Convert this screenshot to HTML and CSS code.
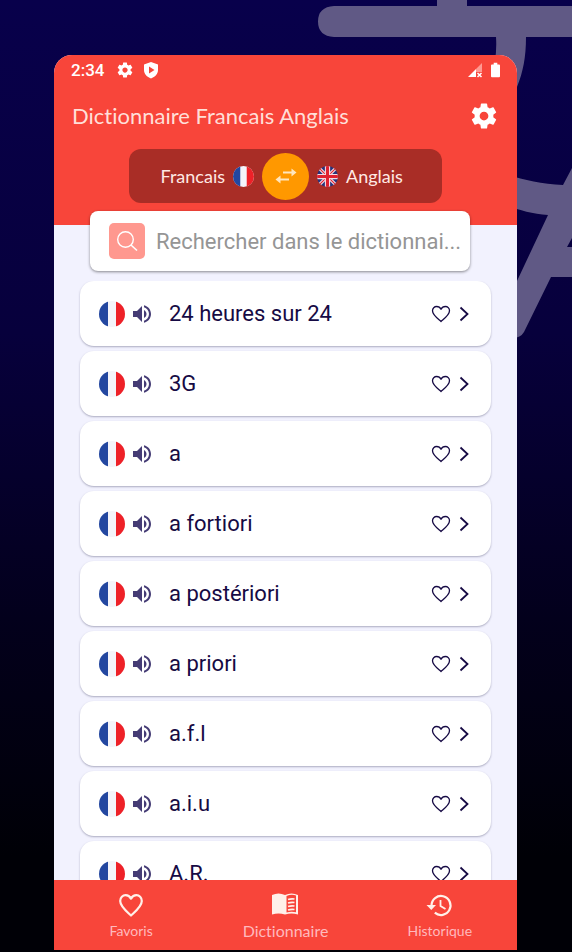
FILE: index.html
```
<!DOCTYPE html>
<html lang="fr">
<head>
    <meta charset="UTF-8">
    <meta name="viewport" content="width=device-width, initial-scale=1.0">
    <title>Dictionnaire Francais Anglais</title>
    <link rel="stylesheet" href="styles.css">
</head>
<body>
    <!-- shared icons -->
    <svg class="sprite" aria-hidden="true">
        <symbol id="gear" viewBox="0 0 24 24"><path d="M19.43 12.98c.04-.32.07-.64.07-.98s-.03-.66-.07-.98l2.11-1.65c.19-.15.24-.42.12-.64l-2-3.46c-.12-.22-.39-.3-.61-.22l-2.49 1c-.52-.4-1.08-.73-1.69-.98l-.38-2.65C14.46 2.18 14.25 2 14 2h-4c-.25 0-.46.18-.49.42l-.38 2.65c-.61.25-1.17.59-1.69.98l-2.49-1c-.23-.09-.49 0-.61.22l-2 3.46c-.13.22-.07.49.12.64l2.11 1.65c-.04.32-.07.65-.07.98s.03.66.07.98l-2.11 1.65c-.19.15-.24.42-.12.64l2 3.46c.12.22.39.3.61.22l2.49-1c.52.4 1.08.73 1.69.98l.38 2.65c.03.24.24.42.49.42h4c.25 0 .46-.18.49-.42l.38-2.65c.61-.25 1.17-.59 1.69-.98l2.49 1c.23.09.49 0 .61-.22l2-3.46c.12-.22.07-.49-.12-.64l-2.11-1.65zM12 15.5c-1.93 0-3.5-1.57-3.5-3.5s1.57-3.5 3.5-3.5 3.5 1.57 3.5 3.5-1.57 3.5-3.5 3.5z" fill="currentColor"/></symbol>
        <symbol id="flag-fr" viewBox="0 0 26 26">
            <clipPath id="round-fr"><circle cx="13" cy="13" r="13"/></clipPath>
            <g clip-path="url(#round-fr)">
                <path d="M0 0h26v26H0z" fill="#f4f4fa"/>
                <path d="M0 0h9v26H0z" fill="#2347a0"/>
                <path d="M17 0h9v26h-9z" fill="#ee2128"/>
            </g>
        </symbol>
        <symbol id="speaker" viewBox="0 0 24 24"><path d="M3 9v6h4l5 5V4L7 9H3zm13.500 3c0-1.770-1.020-3.290-2.500-4.030v8.050c1.480-.73 2.500-2.250 2.500-4.020zM14 3.230v2.060c2.890.86 5 3.540 5 6.710s-2.110 5.850-5 6.710v2.060c4.010-.91 7-4.490 7-8.770s-2.990-7.860-7-8.770z" fill="currentColor"/></symbol>
        <symbol id="heart" viewBox="0 0 20 18"><path d="M10 16.500C7 13.800 1.500 10 1.500 5.800 1.500 3.200 3.400 1.500 5.600 1.500c1.900 0 3.500 1 4.400 2.800.9-1.800 2.500-2.800 4.400-2.800 2.200 0 4.100 1.700 4.100 4.300 0 4.200-5.500 8-8.500 10.700z" fill="none" stroke="currentColor" stroke-width="1.300" stroke-linejoin="round"/></symbol>
        <symbol id="chevron" viewBox="0 0 10 16"><path d="M1.500 1.500 8.500 8l-7 6.500" fill="none" stroke="currentColor" stroke-width="1.800"/></symbol>
    </svg>

    <!-- big translate mark behind the phone -->
    <svg class="backdrop" viewBox="0 0 254 340" aria-hidden="true">
        <path d="M119 0h30v6h105v31h-46c0 20-3 35-9 50l-25-10c3-13 5-26 4-40H16Q0 36 0 21.500T16 6h103z"/>
        <path d="M190 175c16 5 34 9 55 10l9-17v70l-5 9h5v30h-21l-27 55q-4 7-14 6l-8-30 15-27 31-66c-15-1-29-5-40-9z"/>
    </svg>

    <div class="phone">
        <header class="header">
            <div class="status">
                <span class="time">2:34</span>
                <svg class="status-icon" aria-hidden="true"><use href="#gear"/></svg>
                <svg class="status-icon" viewBox="0 0 18 18" aria-hidden="true"><path d="M9 1 16 3.500V9c0 4-3 7-7 8.500C5 16 2 13 2 9V3.500zM7 5.500v7L12.500 9z" fill="currentColor" fill-rule="evenodd"/></svg>
                <svg class="signal" viewBox="0 0 16 16" aria-hidden="true">
                    <path d="M15 1v9H9V7z" fill="#ff9a92"/>
                    <path d="M1 15 9 7v8z" fill="currentColor"/>
                    <path d="m10.500 11 4 4m0-4-4 4" stroke="currentColor" stroke-width="1.500"/>
                </svg>
                <svg class="battery" viewBox="0 0 10 16" aria-hidden="true"><path d="M3 0h4v2h2q1 0 1 1v12q0 1-1 1H1q-1 0-1-1V3q0-1 1-1h2z" fill="currentColor"/></svg>
            </div>
            <div class="title-row">
                <h1>Dictionnaire Francais Anglais</h1>
                <button class="settings" aria-label="Paramètres"><svg aria-hidden="true"><use href="#gear"/></svg></button>
            </div>
            <div class="languages">
                <div class="lang from">
                    <span>Francais</span>
                    <svg class="lang-flag" aria-hidden="true"><use href="#flag-fr"/></svg>
                </div>
                <button class="swap" aria-label="Inverser les langues">
                    <svg viewBox="0 0 24 18" aria-hidden="true"><path d="M9 5.500h9M6 12.500h9" stroke="currentColor" stroke-width="2"/><path d="m17.500 1.500 5 4-5 4zM6.500 8.500l-5 4 5 4z" fill="currentColor"/></svg>
                </button>
                <div class="lang to">
                    <svg class="lang-flag" viewBox="0 0 26 26" aria-hidden="true">
                        <clipPath id="round-uk"><circle cx="13" cy="13" r="13"/></clipPath>
                        <g clip-path="url(#round-uk)">
                            <path d="M0 0h26v26H0z" fill="#29337a"/>
                            <path d="m0 0 26 26M26 0 0 26" stroke="#f3dbe4" stroke-width="4"/>
                            <path d="m0 0 26 26M26 0 0 26" stroke="#e0202f" stroke-width="1.300"/>
                            <path d="M13 0v26M0 13h26" stroke="#f3dbe4" stroke-width="6.500"/>
                            <path d="M13 0v26M0 13h26" stroke="#e0202f" stroke-width="3.800"/>
                        </g>
                    </svg>
                    <span>Anglais</span>
                </div>
            </div>
        </header>

        <form class="search">
            <button class="search-button" type="button" aria-label="Rechercher">
                <svg viewBox="0 0 22 22" aria-hidden="true"><circle cx="9.500" cy="9.500" r="7.800" fill="none" stroke="currentColor" stroke-width="1.400"/><path d="m15 15 6 5.500" stroke="currentColor" stroke-width="1.600"/></svg>
            </button>
            <input type="text" aria-label="Rechercher dans le dictionnaire" placeholder="Rechercher dans le dictionnai...">
        </form>

        <ul class="words">
            <li class="word">
                <svg class="flag" aria-hidden="true"><use href="#flag-fr"/></svg>
                <button class="speak" aria-label="Écouter"><svg aria-hidden="true"><use href="#speaker"/></svg></button>
                <span class="term">24 heures sur 24</span>
                <button class="like" aria-label="Ajouter aux favoris"><svg aria-hidden="true"><use href="#heart"/></svg></button>
                <a class="open" href="#" aria-label="Ouvrir"><svg aria-hidden="true"><use href="#chevron"/></svg></a>
            </li>
            <li class="word">
                <svg class="flag" aria-hidden="true"><use href="#flag-fr"/></svg>
                <button class="speak" aria-label="Écouter"><svg aria-hidden="true"><use href="#speaker"/></svg></button>
                <span class="term">3G</span>
                <button class="like" aria-label="Ajouter aux favoris"><svg aria-hidden="true"><use href="#heart"/></svg></button>
                <a class="open" href="#" aria-label="Ouvrir"><svg aria-hidden="true"><use href="#chevron"/></svg></a>
            </li>
            <li class="word">
                <svg class="flag" aria-hidden="true"><use href="#flag-fr"/></svg>
                <button class="speak" aria-label="Écouter"><svg aria-hidden="true"><use href="#speaker"/></svg></button>
                <span class="term">a</span>
                <button class="like" aria-label="Ajouter aux favoris"><svg aria-hidden="true"><use href="#heart"/></svg></button>
                <a class="open" href="#" aria-label="Ouvrir"><svg aria-hidden="true"><use href="#chevron"/></svg></a>
            </li>
            <li class="word">
                <svg class="flag" aria-hidden="true"><use href="#flag-fr"/></svg>
                <button class="speak" aria-label="Écouter"><svg aria-hidden="true"><use href="#speaker"/></svg></button>
                <span class="term">a fortiori</span>
                <button class="like" aria-label="Ajouter aux favoris"><svg aria-hidden="true"><use href="#heart"/></svg></button>
                <a class="open" href="#" aria-label="Ouvrir"><svg aria-hidden="true"><use href="#chevron"/></svg></a>
            </li>
            <li class="word">
                <svg class="flag" aria-hidden="true"><use href="#flag-fr"/></svg>
                <button class="speak" aria-label="Écouter"><svg aria-hidden="true"><use href="#speaker"/></svg></button>
                <span class="term">a postériori</span>
                <button class="like" aria-label="Ajouter aux favoris"><svg aria-hidden="true"><use href="#heart"/></svg></button>
                <a class="open" href="#" aria-label="Ouvrir"><svg aria-hidden="true"><use href="#chevron"/></svg></a>
            </li>
            <li class="word">
                <svg class="flag" aria-hidden="true"><use href="#flag-fr"/></svg>
                <button class="speak" aria-label="Écouter"><svg aria-hidden="true"><use href="#speaker"/></svg></button>
                <span class="term">a priori</span>
                <button class="like" aria-label="Ajouter aux favoris"><svg aria-hidden="true"><use href="#heart"/></svg></button>
                <a class="open" href="#" aria-label="Ouvrir"><svg aria-hidden="true"><use href="#chevron"/></svg></a>
            </li>
            <li class="word">
                <svg class="flag" aria-hidden="true"><use href="#flag-fr"/></svg>
                <button class="speak" aria-label="Écouter"><svg aria-hidden="true"><use href="#speaker"/></svg></button>
                <span class="term">a.f.l</span>
                <button class="like" aria-label="Ajouter aux favoris"><svg aria-hidden="true"><use href="#heart"/></svg></button>
                <a class="open" href="#" aria-label="Ouvrir"><svg aria-hidden="true"><use href="#chevron"/></svg></a>
            </li>
            <li class="word">
                <svg class="flag" aria-hidden="true"><use href="#flag-fr"/></svg>
                <button class="speak" aria-label="Écouter"><svg aria-hidden="true"><use href="#speaker"/></svg></button>
                <span class="term">a.i.u</span>
                <button class="like" aria-label="Ajouter aux favoris"><svg aria-hidden="true"><use href="#heart"/></svg></button>
                <a class="open" href="#" aria-label="Ouvrir"><svg aria-hidden="true"><use href="#chevron"/></svg></a>
            </li>
            <li class="word">
                <svg class="flag" aria-hidden="true"><use href="#flag-fr"/></svg>
                <button class="speak" aria-label="Écouter"><svg aria-hidden="true"><use href="#speaker"/></svg></button>
                <span class="term">A.R.</span>
                <button class="like" aria-label="Ajouter aux favoris"><svg aria-hidden="true"><use href="#heart"/></svg></button>
                <a class="open" href="#" aria-label="Ouvrir"><svg aria-hidden="true"><use href="#chevron"/></svg></a>
            </li>
        </ul>

        <nav class="tabs">
            <a class="tab" href="#">
                <svg viewBox="0 0 28 26" aria-hidden="true"><path d="M14 23.500C9.500 19.300 3.200 14.500 3.200 9c0-3.500 2.600-5.800 5.400-5.800 2.200 0 4.200 1.200 5.400 3.400 1.200-2.200 3.200-3.400 5.400-3.400 2.800 0 5.400 2.300 5.400 5.800 0 5.500-6.300 10.300-10.800 14.500z" fill="none" stroke="currentColor" stroke-width="2.200" stroke-linejoin="round"/></svg>
                <span>Favoris</span>
            </a>
            <a class="tab active" href="#">
                <svg viewBox="0 0 28 26" aria-hidden="true">
                    <path d="M1 3q6.500-3 13 0 6.500-3 13 0v19.500q-6.500-2-13 0-6.500-2-13 0z" fill="currentColor"/>
                    <path d="M15.500 4q5-2 9.500-.5v16.700q-5-1-9.500.3z" fill="#f8453a"/>
                    <path d="M17 7.500q3-1 6.500-.5M17 11q3-1 6.500-.5M17 14.500q3-1 6.500-.5M17 18q3-1 6.500-.5" fill="none" stroke="currentColor" stroke-width="1.700"/>
                </svg>
                <span>Dictionnaire</span>
            </a>
            <a class="tab" href="#">
                <svg viewBox="0 0 28 26" aria-hidden="true"><path d="M5.500 13.500a9.500 9.500 0 1 1 3.300 7.200" fill="none" stroke="currentColor" stroke-width="2.200"/><path d="M.5 13h9.500l-4.700 5z" fill="currentColor"/><path d="M14.500 8v6l5 3" fill="none" stroke="currentColor" stroke-width="1.800"/></svg>
                <span>Historique</span>
            </a>
        </nav>
    </div>
</body>
</html>
```

FILE: styles.css
```
* {
    box-sizing: border-box;
}
body {
    display: flex;
    height: 100vh;
    margin: 0;
    padding: 55px 55px 2px 54px;
    overflow: hidden;
    background: linear-gradient(#08004b 0%, #07003c 35%, #03001c 65%, #000006 90%);
    font-family: Roboto, sans-serif;
    font-variant-ligatures: none;
    color: #160a44;
}
svg {
    display: block;
}
button {
    display: flex;
    align-items: center;
    justify-content: center;
    flex: none;
    padding: 0;
    border: none;
    background: none;
    color: inherit;
    cursor: pointer;
}
a {
    color: inherit;
    text-decoration: none;
}
.sprite {
    position: absolute;
    width: 0;
    height: 0;
}
.backdrop {
    position: absolute;
    top: 0;
    right: 0;
    width: 254px;
    height: 340px;
    fill: #605985;
}
.phone {
    position: relative;
    display: flex;
    flex: 1;
    flex-direction: column;
    min-width: 0;
    overflow: hidden;
    border-radius: 18px 18px 0 0;
    background-color: #f2f2fe;
}

/* header */
.header {
    flex: none;
    padding-bottom: 22px;
    background-color: #f8453a;
    color: #fff;
}
.status {
    display: flex;
    align-items: center;
    height: 30px;
    padding: 0 17px;
}
.time {
    margin-right: 12px;
    font-size: 17px;
    font-weight: 500;
}
.status-icon {
    width: 18px;
    height: 18px;
    margin-right: 8px;
}
.signal {
    width: 16px;
    height: 16px;
    margin-left: auto;
    margin-right: 8px;
}
.battery {
    width: 9px;
    height: 16px;
}
.title-row {
    display: flex;
    align-items: center;
    justify-content: space-between;
    height: 62px;
    margin-bottom: 2px;
    padding: 0 18px;
}
.title-row h1 {
    margin: 0;
    font-family: Lato, sans-serif;
    font-size: 22px;
    font-weight: 400;
    line-height: 24px;
    color: #ffdfd8;
}
.settings svg {
    width: 30px;
    height: 30px;
}
.languages {
    display: grid;
    grid-template-columns: 1fr 47px 1fr;
    align-items: center;
    gap: 8px;
    height: 54px;
    margin: 0 75px;
    border-radius: 12px;
    background-color: #a92d26;
}
.lang {
    display: flex;
    align-items: center;
    gap: 8px;
    font-family: Lato, sans-serif;
    font-size: 18px;
    color: #ffe9e4;
}
.from {
    justify-content: flex-end;
}
.lang-flag {
    width: 21px;
    height: 21px;
}
.swap {
    height: 47px;
    border-radius: 50%;
    background-color: #ff9800;
    color: #ffe6bd;
}
.swap svg {
    width: 24px;
    height: 18px;
}

/* search */
.search {
    display: flex;
    align-items: center;
    flex: none;
    gap: 11px;
    height: 60px;
    margin: -14px 47px 10px 36px;
    padding: 0 8px 0 19px;
    border-radius: 8px;
    background-color: #fff;
    box-shadow: 0 1px 3px rgba(0, 0, 0, 0.45);
}
.search-button {
    width: 36px;
    height: 36px;
    border-radius: 5px;
    background-color: #ff988f;
    color: #fff;
}
.search-button svg {
    width: 22px;
    height: 22px;
}
.search input {
    flex: 1;
    min-width: 0;
    padding: 0;
    border: none;
    outline: none;
    background: none;
    font-family: inherit;
    font-size: 22px;
    color: inherit;
}
.search input::placeholder {
    color: #959595;
}

/* word list */
.words {
    display: flex;
    flex: 1;
    flex-direction: column;
    gap: 5px;
    min-height: 0;
    margin: 0;
    padding: 0 26px;
    overflow: hidden;
    list-style: none;
}
.word {
    display: flex;
    align-items: center;
    flex: none;
    height: 65px;
    padding: 0 22px 0 19px;
    border-radius: 14px;
    background-color: #fff;
    box-shadow: 0 1px 2px rgba(40, 40, 80, 0.35);
}
.flag {
    width: 26px;
    height: 26px;
}
.speak {
    margin: 0 15px 0 5px;
    color: #453c75;
}
.speak svg {
    width: 24px;
    height: 24px;
}
.term {
    flex: 1;
    font-size: 22px;
    line-height: 27px;
}
.like {
    margin-right: 8px;
}
.like svg {
    width: 20px;
    height: 18px;
}
.open svg {
    width: 10px;
    height: 16px;
}

/* bottom tabs */
.tabs {
    display: grid;
    grid-template-columns: repeat(3, 1fr);
    flex: none;
    height: 70px;
    background-color: #f8453a;
}
.tab {
    display: flex;
    flex-direction: column;
    align-items: center;
    gap: 3px;
    padding-top: 12px;
    font-family: Lato, sans-serif;
    font-size: 14px;
    line-height: 20px;
    color: #ffb9bd;
}
.tab svg {
    width: 28px;
    height: 26px;
    color: #fff0e9;
}
.active {
    font-size: 16px;
}
```
